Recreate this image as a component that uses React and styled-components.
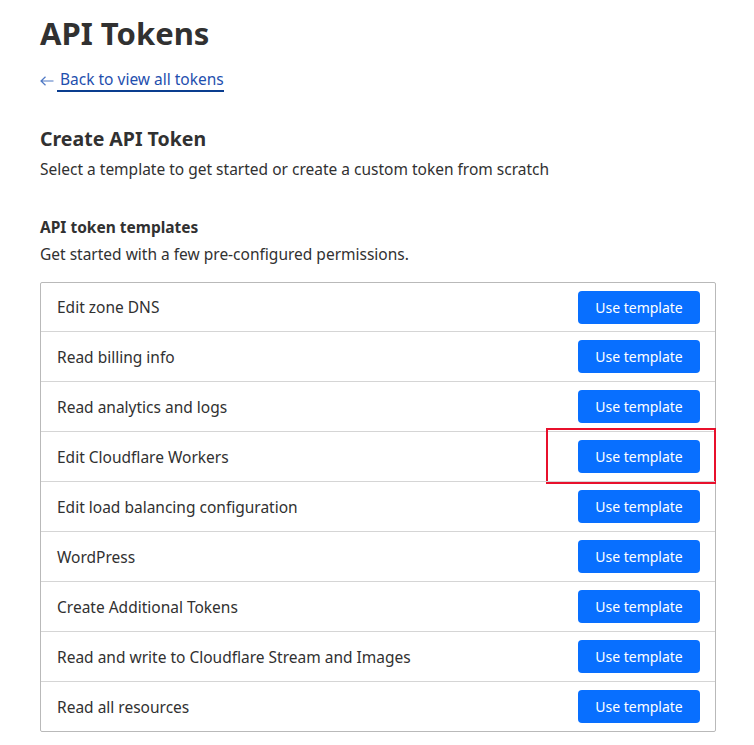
import React from 'react';
import styled, { createGlobalStyle } from 'styled-components';

const GlobalStyle = createGlobalStyle`
  body {
    margin: 0;
    background: #fff;
    font-family: "Noto Sans", "Open Sans", sans-serif;
    color: #313131;
  }
`;

const Page = styled.div`
  padding: 13px 38px 0 40px;
  display: flex;
  flex-direction: column;
`;

const Title = styled.h1`
  margin: 0;
  font-size: 31px;
  line-height: 40px;
  font-weight: 700;
  color: #313131;
`;

const BackLink = styled.a`
  margin-top: 16px;
  align-self: flex-start;
  display: flex;
  align-items: center;
  gap: 3px;
  font-size: 15.5px;
  line-height: 20px;
  color: #1f4fae;
  text-decoration: none;
  cursor: pointer;
`;

const LinkText = styled.span`
  border-bottom: 2px solid #0a3d8f;
  padding: 0 0 1px 3px;
`;

const SectionTitle = styled.h2`
  margin: 34px 0 0;
  font-size: 19.5px;
  line-height: 26px;
  font-weight: 700;
`;

const SubTitle = styled.h3`
  margin: 36px 0 0;
  font-size: 15.5px;
  line-height: 22px;
  font-weight: 700;
`;

const Text = styled.p`
  margin: ${p => p.$top || 6}px 0 0;
  font-size: 15.5px;
  line-height: 22px;
`;

const Table = styled.div`
  margin-top: 17px;
  border: 1px solid #b9b9b9;
  border-radius: 2px;
`;

const Row = styled.div`
  position: relative;
  height: 48px;
  box-sizing: border-box;
  display: flex;
  align-items: center;
  justify-content: space-between;
  padding: 0 15px 0 16px;
  & + & {
    height: 50px;
    border-top: 1px solid #d5d5d5;
  }
`;

const RowLabel = styled.span`
  font-size: 15.5px;
  color: #313131;
`;

const Button = styled.button`
  width: 122px;
  height: 33px;
  border: none;
  border-radius: 4px;
  background: #086fff;
  color: #fff;
  font-family: inherit;
  font-size: 14px;
  cursor: pointer;
`;

const Highlight = styled.div`
  position: absolute;
  top: -4px;
  right: -1px;
  width: 170px;
  height: 56px;
  box-sizing: border-box;
  border: 2px solid #e8102c;
  pointer-events: none;
`;

const ArrowLeft = () => (
  <svg width="14" height="10" viewBox="0 0 14 10" fill="none" stroke="#4f78c4" strokeWidth="1.2">
    <path d="M13.5 5H1M5.5 0.7L1 5l4.5 4.3" />
  </svg>
);

const templates = [
  'Edit zone DNS',
  'Read billing info',
  'Read analytics and logs',
  'Edit Cloudflare Workers',
  'Edit load balancing configuration',
  'WordPress',
  'Create Additional Tokens',
  'Read and write to Cloudflare Stream and Images',
  'Read all resources',
];

export default function App() {
  return (
    <>
      <GlobalStyle />
      <Page>
        <Title>API Tokens</Title>
        <BackLink>
          <ArrowLeft />
          <LinkText>Back to view all tokens</LinkText>
        </BackLink>
        <SectionTitle>Create API Token</SectionTitle>
        <Text>Select a template to get started or create a custom token from scratch</Text>
        <SubTitle>API token templates</SubTitle>
        <Text $top={5}>Get started with a few pre-configured permissions.</Text>
        <Table>
          {templates.map(name => (
            <Row key={name}>
              <RowLabel>{name}</RowLabel>
              <Button>Use template</Button>
              {name === 'Edit Cloudflare Workers' && <Highlight />}
            </Row>
          ))}
        </Table>
      </Page>
    </>
  );
}
